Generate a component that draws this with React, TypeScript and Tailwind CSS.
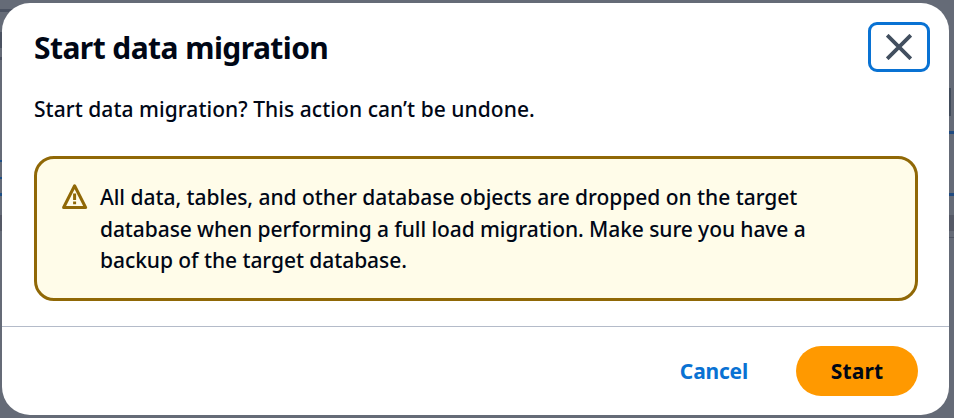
import React from "react";

function CloseIcon() {
  return (
    <svg width="26" height="26" viewBox="0 0 26 26" fill="none" stroke="#424f5f" strokeWidth="3.8">
      <path d="M1.2 1.2 24.8 24.8M24.8 1.2 1.2 24.8" />
    </svg>
  );
}

function WarningIcon() {
  return (
    <svg className="shrink-0" width="26" height="26" viewBox="0 0 26 26" fill="none" stroke="#906806" strokeWidth="3" strokeLinejoin="round">
      <path d="M12.6 1.8 23.6 23.5H1.6Z" />
      <path d="M12.6 9.5v6.5M12.6 17.4v2.8" strokeLinejoin="miter" />
    </svg>
  );
}

function Backdrop() {
  return (
    <div className="absolute inset-0 flex justify-between bg-[#656b77]">
      <div className="flex w-7 flex-col">
        <div className="mt-[9px] h-[3px] bg-[#4b5261]" />
        <div className="mt-5 h-4 w-[2px] bg-[#4b5261]" />
        <div className="mt-[9px] h-[3px] w-[2px] bg-[#4b5261]" />
        <div className="mt-[100px] h-[2px] w-[2px] bg-[#1d4f86]" />
        <div className="mt-[15px] h-[2px] w-[2px] bg-[#1d4f86]" />
        <div className="mt-[14px] h-[3px] w-[2px] bg-[#1d4f86]" />
        <div className="mt-[19px] h-4 w-[2px] bg-[#555966]" />
      </div>
      <div className="flex w-[5px] flex-col">
        <div className="mt-[88px] h-7 w-[2px] bg-[#414b5a]" />
        <div className="mt-[15px] h-[3px] bg-[#1f4a80]" />
        <div className="mt-[59px] h-[3px] bg-[#1f4a80]" />
        <div className="mt-[19px] h-4 bg-[#555966]" />
        <div className="mt-[6px] h-px bg-[#4f5563]" />
      </div>
    </div>
  );
}

export default function App() {
  return (
    <div className="relative h-[418px] w-[954px] overflow-hidden pl-[2px] pt-[3px] font-['Noto_Sans',sans-serif] text-[#000716]">
      <Backdrop />
      <section className="relative flex h-[412px] w-[947px] flex-col rounded-[28px] bg-white">
        <header className="flex h-[86px] items-start justify-between pl-8 pr-[19px] pt-[19px]">
          <h1 className="mt-[4px] whitespace-nowrap text-[30px] font-bold leading-[44px] tracking-[-0.57px]">Start data migration</h1>
          <button className="flex h-[50px] w-[62px] items-center justify-center rounded-[9px] border-3 border-[#0972d3]">
            <CloseIcon />
          </button>
        </header>
        <div className="flex-1 px-8">
          <p className="whitespace-nowrap pt-[4px] text-[21px] font-medium leading-8 tracking-[0.05px]">Start data migration? This action can’t be undone.</p>
          <div className="mt-[31px] flex h-[145px] w-[884px] rounded-[20px] border-3 border-[#906806] bg-[#fffce9] pl-[25px] pt-[22px]">
            <div className="pt-[3px]"><WarningIcon /></div>
            <div className="ml-[12px] mt-px whitespace-nowrap text-[21px] font-medium leading-[31.5px]">
              <div className="tracking-[-0.03px]">All data, tables, and other database objects are dropped on the target</div>
              <div className="tracking-[-0.08px]">database when performing a full load migration. Make sure you have a</div>
              <div className="tracking-[-0.06px]">backup of the target database.</div>
            </div>
          </div>
        </div>
        <footer className="flex h-[89px] items-start justify-end border-t border-[#b4bbc9] pr-[31px] pt-[19px] text-[21px] font-bold">
          <button className="mr-[48px] h-[50px] pt-[2px] tracking-[-0.2px] text-[#0972d3]">Cancel</button>
          <button className="h-[50px] w-[122px] rounded-full bg-[#ff9900] pt-[2px] tracking-[0.15px]">Start</button>
        </footer>
      </section>
    </div>
  );
}
